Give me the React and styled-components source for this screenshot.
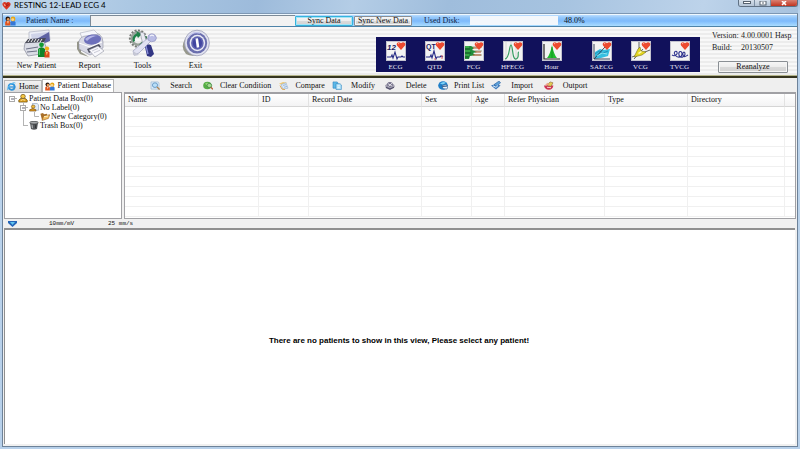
import styled, { createGlobalStyle } from 'styled-components'

const GlobalStyle = createGlobalStyle`
    * {
        box-sizing: border-box;
    }
    body {
        margin: 0;
        background: #bcd2ea;
    }
    button,
    input {
        font: inherit;
        color: inherit;
        margin: 0;
        padding: 0;
        border: 0;
        border-radius: 0;
    }
`

const Window = styled.div`
    display: flex;
    flex-direction: column;
    min-height: 100vh;
    padding: 0 2px 2px;
    background: linear-gradient(#a3c0df, #bcd4ec 13px, #b7d0ea);
    font-family: 'Liberation Serif', 'Times New Roman', serif;
    font-size: 8px;
    line-height: 10px;
    color: #111;
`

const TitleBar = styled.header`
    display: flex;
    justify-content: space-between;
    height: 13px;
    background: linear-gradient(
        100deg,
        #c3d8ec 0%,
        #a9c6e2 18%,
        #9dbbdb 32%,
        #b4cde6 44%,
        #9fbddc 56%,
        #a6c3e0 70%,
        #bdd3ea 88%,
        #a7c2de 100%
    );
`

const Title = styled.h1`
    display: flex;
    align-items: center;
    gap: 3px;
    margin: 0;
    height: 10px;
    font: 400 8px/10px Lato, sans-serif;
    color: #000;
`

const WindowButtons = styled.div`
    display: flex;
    height: 7px;
    border: 1px solid #5f7184;
    border-top: 0;
    border-radius: 0 0 3px 3px;
    overflow: hidden;
`

const WindowButton = styled.button`
    display: flex;
    align-items: center;
    justify-content: center;
    width: ${(p) => (p.$close ? 26 : 16)}px;
    border-right: ${(p) => (p.$close ? 0 : '1px solid #7d8fa3')};
    background: ${(p) =>
        p.$close ? 'linear-gradient(#d98072, #c13420)' : 'linear-gradient(#d6e0ea, #b4c4d6)'};
`

const Frame = styled.div`
    display: flex;
    flex-direction: column;
    flex: 1;
    border: 1px solid #6d8299;
    border-top-color: #7d97b3;
    background: #f0f0f0;
`

const PatientBar = styled.form`
    display: flex;
    align-items: center;
    height: 13px;
    border-top: 1px solid #eef8ff;
    border-bottom: 1px solid #4e83a8;
    background: linear-gradient(#b9dcfe, #8ec4fb 3px, #7dbafb 6px, #a9dcff 11px);
`

const PatientLabel = styled.label`
    display: flex;
    align-items: center;
    gap: 10px;
    width: 87px;
    padding-left: 2px;
    color: #12243e;
`

const PatientInput = styled.input`
    width: 205px;
    height: 11px;
    border-top: 1px solid #7c8a97;
    border-left: 1px solid #7c8a97;
    background: #f2f2f2;
`

const PushButton = styled.button`
    width: ${(p) => p.$width}px;
    height: ${(p) => p.$height}px;
    border: 1px solid ${(p) => (p.$active ? '#35b4dc' : '#8a8f94')};
    border-radius: 1px;
    background: linear-gradient(#f6f6f6, #ececec 50%, #dadada 50%, #d2d2d2);
    box-shadow: inset 0 0 0 1px ${(p) => (p.$active ? '#a5e4f7' : '#f5f5f5')};
    line-height: 8px;
`

const SyncButtons = styled.div`
    display: flex;
    gap: 1px;
`

const DiskLabel = styled.span`
    width: 58px;
    padding-left: 12px;
    color: #12243e;
`

const DiskBar = styled.div`
    display: flex;
    flex: 1;
    align-items: center;
    height: 9px;
`

const DiskFree = styled.div`
    width: 88px;
    height: 9px;
    margin-right: 6px;
    background: #f3f7fb;
`

const Ribbon = styled.section`
    display: flex;
    justify-content: space-between;
    height: 48px;
    background: repeating-linear-gradient(#f8f8f8 0 2px, #ececec 2px 4px);
`

const MainActions = styled.nav`
    display: flex;
    padding-left: 7px;
`

const MainAction = styled.button`
    display: flex;
    flex-direction: column;
    align-items: center;
    width: 53px;
    padding-top: 2px;
    background: none;

    svg {
        margin-bottom: 3px;
    }
`

const RibbonRight = styled.div`
    display: flex;
    gap: 12px;
`

const Analyses = styled.div`
    display: flex;
    gap: 11px;
    align-self: flex-start;
    width: 324px;
    height: 35px;
    margin-top: 10px;
    background: #11115b;
`

const AnalysisGroup = styled.div`
    display: flex;
`

const AnalysisButton = styled.button`
    display: flex;
    flex-direction: column;
    align-items: center;
    width: 39px;
    padding-top: 4px;
    background: none;
    color: #e8e8f4;
    font-size: 7px;

    svg {
        margin-bottom: 1px;
    }
`

const VersionInfo = styled.div`
    width: 85px;
    padding-top: 3px;

    dl {
        display: grid;
        grid-template-columns: 29px 1fr;
        margin: 0 0 7px;
        line-height: 12px;
        color: #222;
        white-space: nowrap;
    }
    dd {
        margin: 0;
    }
    button {
        margin-left: 6px;
    }
`

const TabBar = styled.div`
    display: flex;
    align-items: flex-end;
    height: 17px;
    padding-left: 1px;
    border-top: 1px solid #b5b58a;
    box-shadow: inset 0 2px #36351f;
    background: #efefef;
`

const Tab = styled.button`
    display: flex;
    align-items: center;
    gap: 3px;
    height: ${(p) => (p.$active ? 13 : 12)}px;
    padding: 0 2px;
    border: 1px solid #b5b5b5;
    border-bottom: 0;
    background: ${(p) => (p.$active ? '#fff' : 'linear-gradient(#f2f2f2, #dcdcdc)')};
    white-space: nowrap;
`

const ListActions = styled.div`
    display: flex;
    height: 13px;
    margin-left: 35px;
`

const ListAction = styled.button`
    display: flex;
    align-items: center;
    width: ${(p) => (p.$wide ? 76 : 53)}px;
    padding-left: 1px;
    background: none;

    span {
        flex: 1;
        text-align: center;
        white-space: nowrap;
    }
`

const Panes = styled.main`
    display: flex;
    gap: 2px;
    height: 127px;
    padding: 0 1px;
`

const TreePane = styled.ul`
    width: 118px;
    margin: 0;
    padding: 1px 0 0 4px;
    border: 1px solid #a0a0a4;
    background: #fff;
    list-style: none;
`

const TreeRow = styled.li`
    display: flex;
    align-items: center;
    gap: 1px;
    height: 9px;
    white-space: nowrap;

    svg {
        flex: none;
    }
`

const ListPane = styled.div`
    flex: 1;
    overflow: hidden;
    border: 1px solid #a0a0a4;
    border-top-width: 2px;
    background: #fff;
`

const Table = styled.table`
    width: 100%;
    table-layout: fixed;
    border-collapse: separate;
    border-spacing: 0;

    th {
        height: 13px;
        padding: 0 0 0 3px;
        border-right: 1px solid #e2e2e2;
        border-bottom: 1px solid #d5d5d5;
        background: linear-gradient(#fff, #f3f3f4);
        font-weight: 400;
        text-align: left;
    }
    td {
        height: 10px;
        padding: 0;
        border-right: 1px solid #f0f0f0;
        border-bottom: 1px solid #f0f0f0;
    }
    th:last-child,
    td:last-child {
        border-right: 0;
    }
`

const ScaleBar = styled.div`
    display: flex;
    align-items: center;
    height: 9px;
    padding-left: 5px;
    font: 6px/9px 'Liberation Mono', monospace;

    button {
        display: flex;
        width: 41px;
        background: none;
    }
    span {
        width: 59px;
    }
`

const Viewer = styled.section`
    display: flex;
    align-items: center;
    justify-content: center;
    flex: 1;
    margin: 0 2px 2px 1px;
    padding: 8px 2px 0 0;
    border-top: 2px solid #8f8f8f;
    border-left: 1px solid #8f8f8f;
    background: #fff;
    font: 700 8px/10px 'Liberation Sans', Arial, sans-serif;
    color: #000;
`

function HeartLogo() {
    return (
        <svg width='9' height='9' viewBox='0 0 9 9' aria-hidden='true'>
            <path d='M4.5 8.7 1 5C-1 2 2.4-.4 4.5 1.8 6.6-.4 10 2 8 5z' fill='#d93422' />
            <path d='M1.4 2.2 4 4.6 2.6 5z' fill='#f9b09c' />
            <path d='M5.4 1.6 4.4 5.2 7.4 3.2' fill='none' stroke='#8d1410' strokeWidth='.6' />
        </svg>
    )
}

function PeopleIcon({ size = 10 }) {
    return (
        <svg width={size + 1} height={size} viewBox='0 0 11 10' aria-hidden='true'>
            <path d='M.2 9.4V6.2Q.6 4.6 2.8 4.6T5.4 6.2v3.2z' fill='#e2531c' />
            <circle cx='2.8' cy='2.8' r='2.3' fill='#28180f' />
            <circle cx='3.2' cy='3.4' r='1.4' fill='#e69a59' />
            <path d='M5.4 9.4V6.4Q5.8 4.8 8 4.8t2.6 1.6v3z' fill='#3478d8' />
            <circle cx='8' cy='3' r='2.4' fill='#e7a615' />
            <circle cx='7.7' cy='3.6' r='1.4' fill='#f8d591' />
            <path d='M2 5.2 3 8l.9-2.8z' fill='#fbd9b8' />
        </svg>
    )
}

function NewPatientIcon() {
    return (
        <svg width='28' height='29' viewBox='0 0 28 29' aria-hidden='true'>
            <path d='M6 3 26 1l1 10-21 4z' fill='#eceef6' stroke='#a4a7ba' strokeWidth='.6' />
            <path d='M8 5 25 3l1 7-17 3z' fill='#cfd3e8' />
            <path d='M10 12 26 3l1 9-10 4z' fill='#5e62a4' />
            <path d='M2 14 21 12l4 12-20 3-4-7z' fill='#dadce5' stroke='#777b8b' strokeWidth='.6' />
            <path d='m2 14 3-4 18-1-2 4z' fill='#454753' />
            <path
                d='m5 13 2-3m1 3 2-3m1 3 2-3m1 3 2-3m1 3 2-3'
                stroke='#f2f2f5'
                strokeWidth='1'
                fill='none'
            />
            <path d='m3 20 12-2m-11 5 10-1' stroke='#6c7085' strokeWidth='1' />
            <circle cx='18.5' cy='15.8' r='2.4' fill='#139a32' />
            <path d='M15 28v-8q3.5-3.5 7 0v8z' fill='#0f842a' />
            <path d='M16.3 20v6' stroke='#56d36f' strokeWidth='1' />
            <circle cx='24' cy='19.6' r='2.2' fill='#f0b01a' />
            <path d='M21.5 28.6v-5.4q2.5-2.6 5 0v5.4z' fill='#db4a1b' />
            <path d='m23 23 .8 3.4 1-3.4z' fill='#ffd16c' />
        </svg>
    )
}

function ReportIcon() {
    return (
        <svg width='28' height='29' viewBox='0 0 28 29' aria-hidden='true'>
            <path d='m1 13 4-2v12l8 5-9-3-3-5z' fill='#969688' />
            <path d='m4 4 14-3 6 6-17 4z' fill='#f5f6fb' stroke='#aaadba' strokeWidth='.6' />
            <path d='M3 12Q5 7 10 7l13-2q4 3 4 8v6l-13 7-11-6z' fill='#d7d8e4' stroke='#8d90a2' strokeWidth='.6' />
            <ellipse cx='16.5' cy='10.6' rx='8.6' ry='5' fill='#6d70bb' transform='rotate(-8 16 10)' />
            <path d='M9 10q5-5 13-3-6 0-11 5z' fill='#b3b5e6' />
            <path d='m3 14 11 4 12-5' stroke='#fff' fill='none' />
            <path d='m11 20 12-5 2 3-12 6z' fill='#4c4e60' />
            <path d='m13 21 9-4 6 5-9 6z' fill='#f8f8fc' stroke='#9497a6' strokeWidth='.6' />
            <path d='m16 22 6-2.6m-4 4.4 6-2.6' stroke='#b6b8c5' strokeWidth='.7' />
        </svg>
    )
}

function ToolsIcon() {
    return (
        <svg width='29' height='29' viewBox='0 0 29 29' aria-hidden='true'>
            <circle cx='10' cy='9.5' r='8' fill='none' stroke='#777a76' strokeWidth='2.2' strokeDasharray='2 1.4' />
            <circle cx='10' cy='9.5' r='6.2' fill='none' stroke='#9aa39c' strokeWidth='2.4' />
            <path d='M5 13Q3 7 9 4l-1-2 6 3-4 4-1-2q-3 2-2 5z' fill='#1f8149' />
            <path d='m13 4 2 8-4 4 5-1 3-7z' fill='#267948' />
            <path d='m12 3 4 1 3 10 3 2-3 4-4-4z' fill='#eaebf3' stroke='#8b8e9b' strokeWidth='.6' />
            <path d='m17 15 6 1 3 9-3 3-4-1-2-9z' fill='#323684' />
            <path d='m18 17 2 8' stroke='#8b90da' strokeWidth='1.3' />
            <path d='m5 22 16-14 4 2-14 14-5 2z' fill='#e1e2f2' stroke='#9296b5' strokeWidth='.6' />
            <path d='M20 7q3-4 7-1 3 3 0 6-4 2-7-1z' fill='#b9bce5' stroke='#888cba' strokeWidth='.6' />
            <path d='M22 7q2-2 4 0' stroke='#fff' fill='none' />
            <path d='m5 22 1 5 5-1z' fill='#c5c7d4' />
        </svg>
    )
}

function ExitIcon() {
    return (
        <svg width='28' height='29' viewBox='0 0 28 29' aria-hidden='true'>
            <path d='M3 10q-5 9 1 15 5 3 11 1z' fill='#97988c' />
            <ellipse cx='15' cy='14' rx='12.4' ry='12.8' fill='#e1e2ef' stroke='#9295b2' strokeWidth='.7' />
            <ellipse cx='15' cy='14' rx='10.2' ry='10.6' fill='#6a6eae' />
            <ellipse cx='15.4' cy='14' rx='7.8' ry='8.2' fill='#e9eaf5' />
            <ellipse cx='15.4' cy='14' rx='6.3' ry='6.8' fill='#6165b0' />
            <ellipse cx='15.4' cy='14' rx='4.6' ry='5.2' fill='#4145a0' />
            <path d='M15.4 9.4v9.2' stroke='#fff' strokeWidth='2.6' transform='rotate(-8 15 14)' />
            <path d='M6 9q4-7 12-5' stroke='#c4c7ee' fill='none' strokeWidth='1.3' />
        </svg>
    )
}

const waves = {
    ECG: (
        <>
            <text x='1' y='8.5' fontSize='8' fontWeight='700' fontStyle='italic' fill='#181b62' fontFamily='Liberation Sans'>
                12
            </text>
            <path d='M1 16h4l1-2 1 3 2-6 2 7 1-2h3l1-1 1 1h2' fill='none' stroke='#252b86' strokeWidth='1.1' />
        </>
    ),
    QTD: (
        <>
            <text x='1' y='8' fontSize='7' fontWeight='700' fill='#181b62' fontFamily='Liberation Sans'>
                QT
            </text>
            <path d='M1 16h4l1-2 1 3 2-7 2 8 1-2h3l1-1 2 1' fill='none' stroke='#252b86' strokeWidth='1.1' />
            <path d='M10 17v2m7-5v4' stroke='#d66' />
        </>
    ),
    FCG: (
        <>
            <path d='M1 6h17M1 10h17M1 14h17' stroke='#b9bba8' strokeWidth='1.4' />
            <path d='M1 5h6l3 2-2 2 5 2-4 1 2 2-5 1-1 3H1z' fill='#208d3b' />
            <path d='M9 7h7M11 11h6M9 14h8' stroke='#b35a30' />
            <path d='M1 8h5m-5 4h6m-6 4h4' stroke='#185727' />
            <path d='M1 6h4m-4 4h5m-5 4h4' stroke='#5cd05c' strokeWidth='.8' />
        </>
    ),
    HFECG: (
        <>
            <path d='M3 1v18M8 1v18M13 1v18' stroke='#d7d9d4' />
            <path d='M2 18c5-1 4-14 6-14s1 15 5 14 1-7 3-7' fill='none' stroke='#369d61' strokeWidth='1.2' />
        </>
    ),
    Hour: (
        <>
            <path d='M2 3v15h16' fill='none' stroke='#222' strokeWidth='1.2' />
            <path d='M5 17q3-3 5-13 2 10 5 13z' fill='#20ba2e' />
            <path d='M10 6v11' stroke='#0f8f20' strokeWidth='.8' />
        </>
    ),
    SAECG: (
        <>
            <path d='m3 11 5-3 3 1 7-1-2 7-7 2-6 1z' fill='#35bfe0' />
            <path d='m3 13 4-3 4 2 5-2' fill='none' stroke='#1a86b0' strokeWidth='.8' />
            <path d='M2 3v15h16M2 18 13 6' fill='none' stroke='#26344c' strokeWidth='.9' />
            <path d='m5 15 5-3 5 1' fill='none' stroke='#a5edf4' strokeWidth='.8' />
        </>
    ),
    VCG: (
        <>
            <path d='M8 1v11M1 16l18-7M3 18 12 8' stroke='#555' strokeWidth='.9' />
            <path d='m3 16 4-8 2-2 1 4 5 1-4 3-4 1z' fill='#e4d621' stroke='#7a7418' strokeWidth='.6' />
            <path d='m7 12 3-2 1 1-3 2z' fill='#fffbc0' />
        </>
    ),
    TVCG: (
        <path
            d='M2 14c3 2 6-1 5-3s-4 0-2 3 7 3 7-1-4-3-3 1 6 2 6-1-3-2-2 1 3 1 5 0'
            fill='none'
            stroke='#30358f'
            strokeWidth='1.1'
        />
    ),
}

function AnalysisIcon({ name }) {
    return (
        <svg width='20' height='20' viewBox='0 0 20 20' aria-hidden='true'>
            <rect x='.5' y='.5' width='19' height='19' fill='#f3f3f3' stroke='#c2c2ce' />
            {waves[name]}
            <path d='M15 9 11.2 4.8C9.4 2 12.8-.2 15 2.2 17.2-.2 20.6 2 18.8 4.8z' fill='#ed4a2f' />
            <path d='m12 3 1.4-1' stroke='#ffb39f' />
        </svg>
    )
}

const listIcons = {
    Search: (
        <>
            <path d='M1 1h7l1 1v7H1z' fill='#dcebf8' stroke='#8fb0d0' strokeWidth='.6' />
            <circle cx='5' cy='4.6' r='2.6' fill='#b8def8' stroke='#5f92c0' strokeWidth='.9' />
            <path d='m7 6.6 2.6 2.8' stroke='#b08350' strokeWidth='1.4' />
        </>
    ),
    'Clear Condition': (
        <>
            <circle cx='4.4' cy='5' r='4.2' fill='#55ad45' />
            <path d='M2 3q2-2 4 0L4 5z' fill='#8fd472' />
            <circle cx='6.4' cy='5' r='2.3' fill='#a6dc92' stroke='#3f7d45' strokeWidth='.7' />
            <path d='m7.8 6.8 2 2.4' stroke='#b55b34' strokeWidth='1.3' />
        </>
    ),
    Compare: (
        <>
            <path d='m0 3 4-2 4 1-3 3z' fill='#f0c971' />
            <path d='m2 4 5-2 2 6-5 1z' fill='#dce8f5' stroke='#8faccc' strokeWidth='.6' />
            <path d='m1 5 2 4 3 .6' fill='none' stroke='#dca24b' />
            <path d='m4 5 3-1M5 7l3-1' stroke='#7da4d0' strokeWidth='.7' />
        </>
    ),
    Modify: (
        <>
            <path d='M1 1h4l1 1v6H1z' fill='#5cb9e8' stroke='#2b82bd' strokeWidth='.6' />
            <path d='M4 3h4l1.4 1.4v5H4z' fill='#aee0f8' stroke='#2b82bd' strokeWidth='.6' />
            <path d='M5.4 5.4h2.4m-2.4 2h2.4' stroke='#fff' strokeWidth='.8' />
        </>
    ),
    Delete: (
        <>
            <path d='m0 5 4-4 5 3 1 2-5 4-4-2z' fill='#a3a1b2' />
            <circle cx='5' cy='4' r='2.8' fill='#77738c' />
            <path d='m3 3 4 2.6M7 2.4 3.4 6' stroke='#f0f0f5' strokeWidth='.9' />
            <path d='m1 7 4 2 4-2' stroke='#52506a' fill='none' strokeWidth='1.2' />
        </>
    ),
    'Print List': (
        <>
            <circle cx='5' cy='5' r='4.8' fill='#1f7fc8' />
            <path d='M2 3q3-3 6-1L5 4z' fill='#7dd1f6' />
            <path d='m4 5 4-1 2 2-1 3-4-.4z' fill='#eaf4fc' stroke='#174a83' strokeWidth='.6' />
            <path d='m4.4 6 5-.4' stroke='#143e74' />
        </>
    ),
    Import: (
        <>
            <path d='m0 5 5-2 4.6 2L5 9.4z' fill='#3f7cbd' />
            <path d='m3 4 5-4 1.6 2-4 4z' fill='#5c9fd8' stroke='#285e9d' strokeWidth='.6' />
            <path d='m2 5.4 3 1.6 2-2' stroke='#e2f2ff' fill='none' />
        </>
    ),
    Outport: (
        <>
            <path d='M0 5h9.4Q9 9.6 4.8 9.6T0 5z' fill='#cf3554' />
            <path d='m3 5 3-4 3 1-2 4z' fill='#e4ce56' stroke='#89612a' strokeWidth='.6' />
            <path d='m1 4 3-2 1 3z' fill='#f0a184' />
            <path d='m3 7 4 .4' stroke='#ffd2d2' />
        </>
    ),
}

const treeIcons = {
    user: (
        <>
            <path d='M.8 9V7Q1.4 4.6 5 4.6T9.2 7v2z' fill='#d99b17' stroke='#634b13' strokeWidth='.7' />
            <circle cx='5' cy='2.7' r='2.3' fill='#f7c843' stroke='#684d16' strokeWidth='.7' />
            <path d='M2.6 7.4q2-2 4.6-.4' stroke='#ffe79a' fill='none' />
        </>
    ),
    label: (
        <>
            <path d='M3.4.5H8L9.6 2v6H3.4z' fill='#e3edf9' stroke='#7b93b3' strokeWidth='.6' />
            <circle cx='4.2' cy='4' r='1.8' fill='#f2bd3b' stroke='#6d4d18' strokeWidth='.6' />
            <path d='M.6 9V7.6q3.4-3 6.4 0V9z' fill='#d89420' stroke='#6d4d18' strokeWidth='.6' />
        </>
    ),
    folder: (
        <>
            <path d='m.4 2 2.6-.8 1 1.2 3-.4.6 5L2 9z' fill='#a9702a' />
            <path d='m2 9.4 1.6-5L9.8 3 8.4 7.2z' fill='#f1bd62' stroke='#98601c' strokeWidth='.6' />
            <path d='m4 5.2 4-.8' stroke='#fff2c4' />
        </>
    ),
    trash: (
        <>
            <path d='m1 2 1 7q3 1.2 6 0l1-7z' fill='#55585b' />
            <ellipse cx='5' cy='1.9' rx='4.3' ry='1.5' fill='#a8abad' stroke='#37393b' strokeWidth='.7' />
            <path d='m3 4 .4 4' stroke='#c1c3c5' strokeWidth='1' />
            <path d='m6.8 4-.3 4' stroke='#2d2f31' strokeWidth='1' />
        </>
    ),
}

function SmallIcon({ children }) {
    return (
        <svg width='10' height='9' viewBox='0 0 10 10' preserveAspectRatio='none' aria-hidden='true'>
            {children}
        </svg>
    )
}

function HomeIcon() {
    return (
        <svg width='9' height='9' viewBox='0 0 9 9' aria-hidden='true'>
            <circle cx='4.6' cy='4.8' r='3' fill='none' stroke='#2f94dc' strokeWidth='1.8' />
            <path d='M2.6 5h5.8' stroke='#2f94dc' strokeWidth='1.3' />
            <path d='M.8 8.2C-.6 5 6-.8 8.4 1' fill='none' stroke='#5cbbef' strokeWidth='1' />
        </svg>
    )
}

// branch lines and the collapse box in front of a tree row
function Guides({ depth, open, tail }) {
    const x = 3 + depth * 11
    return (
        <svg width={8 + depth * 11} height='9' aria-hidden='true'>
            <g fill='none' stroke='#b4b4b4' strokeWidth='1'>
                {depth === 1 && <path d={tail ? 'M14.5 0v5' : 'M14.5 0v9'} />}
                {depth === 2 && <path d='M14.5 0v9' />}
                <path d={depth === 2 ? 'M25.5 0v4.5h5' : `M${x} 4.5h5`} />
                {open && <rect x={x - 2.5} y='2.5' width='5' height='5' fill='#fff' stroke='#aaa' />}
                {open && <path d={`M${x - 1} 5h3`} stroke='#667' />}
            </g>
        </svg>
    )
}

const tree = [
    { name: 'Patient Data Box(0)', icon: 'user', depth: 0, open: true },
    { name: 'No Label(0)', icon: 'label', depth: 1, open: true },
    { name: 'New Category(0)', icon: 'folder', depth: 2 },
    { name: 'Trash Box(0)', icon: 'trash', depth: 1, tail: true },
]

const mainActions = [
    ['New Patient', NewPatientIcon],
    ['Report', ReportIcon],
    ['Tools', ToolsIcon],
    ['Exit', ExitIcon],
]

const analyses = [
    ['ECG', 'QTD', 'FCG', 'HFECG', 'Hour'],
    ['SAECG', 'VCG', 'TVCG'],
]

const columns = [
    ['Name', 134],
    ['ID', 50],
    ['Record Date', 113],
    ['Sex', 50],
    ['Age', 33],
    ['Refer Physician', 100],
    ['Type', 83],
    ['Directory', 97],
    ['', null],
]

function App() {
    return (
        <>
            <GlobalStyle />
            <Window>
                <TitleBar>
                    <Title>
                        <HeartLogo />
                        RESTING 12-LEAD ECG 4
                    </Title>
                    <WindowButtons>
                        <WindowButton aria-label='Minimize'>
                            <svg width='8' height='4'>
                                <rect x='.5' y='.5' width='7' height='2' fill='#fff' stroke='#56626f' />
                            </svg>
                        </WindowButton>
                        <WindowButton aria-label='Maximize'>
                            <svg width='8' height='5'>
                                <rect x='1' y='0' width='6' height='4' fill='#fff' stroke='#56626f' />
                                <path d='M3 2h2' stroke='#56626f' />
                            </svg>
                        </WindowButton>
                        <WindowButton $close aria-label='Close'>
                            <svg width='8' height='5'>
                                <path d='m2 0 4 4m0-4L2 4' stroke='#fff' strokeWidth='1.6' />
                            </svg>
                        </WindowButton>
                    </WindowButtons>
                </TitleBar>

                <Frame>
                    <PatientBar onSubmit={(e) => e.preventDefault()}>
                        <PatientLabel htmlFor='patient'>
                            <PeopleIcon size={10} />
                            Patient Name :
                        </PatientLabel>
                        <PatientInput id='patient' type='text' />
                        <SyncButtons>
                            <PushButton $active $width={58} $height={10}>
                                Sync Data
                            </PushButton>
                            <PushButton $width={58} $height={10}>
                                Sync New Data
                            </PushButton>
                        </SyncButtons>
                        <DiskLabel>Used Disk:</DiskLabel>
                        <DiskBar>
                            <DiskFree />
                            48.0%
                        </DiskBar>
                    </PatientBar>

                    <Ribbon>
                        <MainActions>
                            {mainActions.map(([name, Icon]) => (
                                <MainAction key={name}>
                                    <Icon />
                                    {name}
                                </MainAction>
                            ))}
                        </MainActions>
                        <RibbonRight>
                            <Analyses>
                                {analyses.map((group) => (
                                    <AnalysisGroup key={group[0]}>
                                        {group.map((name) => (
                                            <AnalysisButton key={name}>
                                                <AnalysisIcon name={name} />
                                                {name}
                                            </AnalysisButton>
                                        ))}
                                    </AnalysisGroup>
                                ))}
                            </Analyses>
                            <VersionInfo>
                                <dl>
                                    <dt>Version:</dt>
                                    <dd>4.00.0001 Hasp</dd>
                                    <dt>Build:</dt>
                                    <dd>20130507</dd>
                                </dl>
                                <PushButton $width={70} $height={12}>
                                    Reanalyze
                                </PushButton>
                            </VersionInfo>
                        </RibbonRight>
                    </Ribbon>

                    <TabBar>
                        <Tab>
                            <HomeIcon />
                            Home
                        </Tab>
                        <Tab $active>
                            <PeopleIcon size={9} />
                            Patient Database
                        </Tab>
                        <ListActions>
                            {Object.keys(listIcons).map((name) => (
                                <ListAction key={name} $wide={name === 'Clear Condition'}>
                                    <SmallIcon>{listIcons[name]}</SmallIcon>
                                    <span>{name}</span>
                                </ListAction>
                            ))}
                        </ListActions>
                    </TabBar>

                    <Panes>
                        <TreePane>
                            {tree.map((node) => (
                                <TreeRow key={node.name}>
                                    <Guides depth={node.depth} open={node.open} tail={node.tail} />
                                    <SmallIcon>{treeIcons[node.icon]}</SmallIcon>
                                    {node.name}
                                </TreeRow>
                            ))}
                        </TreePane>
                        <ListPane>
                            <Table>
                                <colgroup>
                                    {columns.map(([name, width]) => (
                                        <col key={name} width={width} />
                                    ))}
                                </colgroup>
                                <thead>
                                    <tr>
                                        {columns.map(([name]) => (
                                            <th key={name}>{name}</th>
                                        ))}
                                    </tr>
                                </thead>
                                <tbody>
                                    {Array.from({ length: 11 }, (_, row) => (
                                        <tr key={row}>
                                            {columns.map(([name]) => (
                                                <td key={name} />
                                            ))}
                                        </tr>
                                    ))}
                                </tbody>
                            </Table>
                        </ListPane>
                    </Panes>

                    <ScaleBar>
                        <button aria-label='Collapse'>
                            <svg width='9' height='6' viewBox='0 0 9 6'>
                                <path d='M0 0h9v2L4.5 6 0 2z' fill='#2465b8' />
                                <path d='M2 1h5L4.5 4z' fill='#62c5ee' />
                            </svg>
                        </button>
                        <span>10mm/mV</span>
                        <span>25 mm/s</span>
                    </ScaleBar>

                    <Viewer>There are no patients to show in this view, Please select any patient!</Viewer>
                </Frame>
            </Window>
        </>
    )
}

export default App
